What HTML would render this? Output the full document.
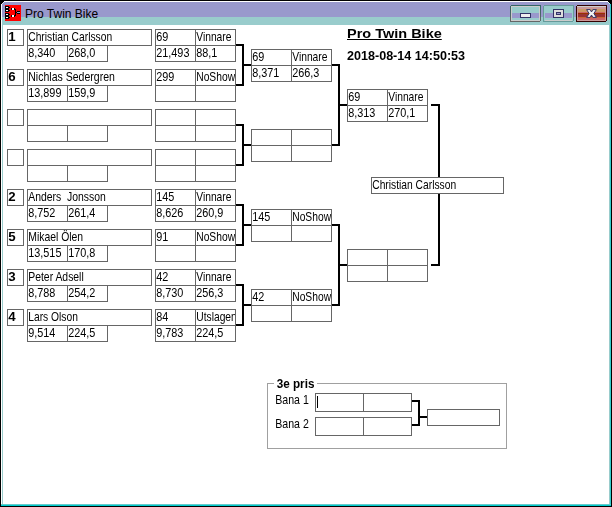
<!DOCTYPE html>
<html><head><meta charset="utf-8"><title>Pro Twin Bike</title>
<style>
html,body{margin:0;padding:0;}
body{width:612px;height:507px;background:#fff;position:relative;overflow:hidden;font-family:"Liberation Sans",sans-serif;color:#000;}
div{position:absolute;box-sizing:content-box;}
.b{border:1px solid #666;background:#fff;}
.r{}
.t{will-change:transform;height:15px;overflow:hidden;white-space:pre;font-size:13px;line-height:15px;}
.t span{display:inline-block;transform:scaleX(0.79);transform-origin:0 0;padding-left:0.3px;}
.n{font-weight:bold;}
.l{overflow:visible;}
.h1,.h2,.lg{will-change:transform;}
.h1{font-weight:bold;font-size:13.3px;line-height:16px;white-space:pre;}
.h1 span{text-decoration:underline;transform:scaleX(1.09);}
.h2 span{transform:scaleX(0.945);}
.h2{font-weight:bold;font-size:13.3px;line-height:16px;white-space:pre;}
.h1 span,.h2 span{display:inline-block;transform-origin:0 0;}
.gb{border:1px solid #a0a0a0;}
.lg{background:#fff;font-weight:bold;font-size:13px;line-height:16px;white-space:pre;}
.lg span{display:inline-block;transform:scaleX(0.9);transform-origin:0 0;padding-left:3px;}
.ttl{font-size:12px;line-height:18px;white-space:pre;letter-spacing:0px;color:#000;}
.n span{transform:scaleX(1.02);}
.d span{transform:scaleX(0.835);}
.l span{transform:scaleX(0.815);}

</style></head>
<body>
<svg style="position:absolute;left:0;top:0" width="612" height="507" viewBox="0 0 612 507" shape-rendering="crispEdges">
<rect x="0" y="0" width="612" height="507" fill="#000"/>
<rect x="1" y="1" width="610" height="505" fill="#fff"/>
<rect x="2" y="2" width="609" height="15" fill="#9999cc"/>
<rect x="2" y="17" width="609" height="8" fill="#99cccc"/>
<rect x="2" y="25" width="1" height="479" fill="#99cccc"/>
<rect x="609" y="17" width="1" height="487" fill="#99cccc"/>
<rect x="610" y="4" width="1" height="502" fill="#33cccc"/>
<rect x="1" y="504" width="610" height="1" fill="#66cccc"/>
<rect x="1" y="505" width="610" height="1" fill="#00cccc"/>
<!-- corners -->
<rect x="1" y="1" width="3" height="1" fill="#000"/><rect x="1" y="2" width="2" height="1" fill="#000"/><rect x="1" y="3" width="1" height="1" fill="#000"/>
<rect x="3" y="2" width="1" height="1" fill="#ddddee"/><rect x="2" y="3" width="1" height="1" fill="#ddddee"/>
<rect x="608" y="1" width="3" height="1" fill="#000"/><rect x="609" y="2" width="2" height="1" fill="#000"/><rect x="610" y="3" width="1" height="1" fill="#000"/>
<rect x="608" y="2" width="1" height="1" fill="#ddeeee"/><rect x="609" y="3" width="1" height="1" fill="#99ffff"/>
<!-- app icon -->
<g>
<rect x="5" y="5" width="16" height="16" fill="#ff0000"/>
<rect x="5" y="6" width="4" height="6" fill="#000"/><rect x="5" y="13" width="4" height="6" fill="#000"/>
<rect x="6" y="7" width="2" height="1" fill="#fff"/><rect x="6" y="10" width="2" height="1" fill="#fff"/>
<rect x="6" y="14" width="2" height="1" fill="#fff"/><rect x="6" y="17" width="2" height="1" fill="#fff"/>
<rect x="9" y="7" width="1" height="1" fill="#000"/><rect x="9" y="10" width="1" height="1" fill="#000"/>
<rect x="9" y="14" width="1" height="1" fill="#000"/><rect x="9" y="17" width="1" height="1" fill="#000"/>
<rect x="11" y="8" width="4" height="2" fill="#000"/><rect x="12" y="8" width="2" height="2" fill="#fff"/>
<rect x="11" y="15" width="4" height="2" fill="#000"/><rect x="12" y="15" width="2" height="2" fill="#fff"/>
<rect x="15" y="9" width="1" height="7" fill="#000"/><rect x="16" y="12" width="1" height="1" fill="#000"/>
<rect x="17" y="11" width="3" height="3" fill="#000"/><rect x="17" y="12" width="3" height="1" fill="#9999cc"/>
</g>
<!-- minimize -->
<g>
<defs><linearGradient id="mg" x1="0" y1="0" x2="0" y2="1"><stop offset="0" stop-color="#336666"/><stop offset="0.45" stop-color="#446666"/><stop offset="1" stop-color="#666666"/></linearGradient></defs><rect x="510" y="5" width="31" height="17" rx="2" fill="url(#mg)"/>
<rect x="511" y="6" width="29" height="15" rx="1" fill="#cccccc"/>
<rect x="512" y="7" width="27" height="6" fill="#99cccc"/>
<rect x="512" y="13" width="27" height="5" fill="#9999cc"/>
<rect x="512" y="18" width="27" height="2" fill="#99cccc"/>
<rect x="520" y="13" width="11" height="5" rx="1" fill="#333366"/>
<rect x="521" y="14" width="9" height="3" fill="#eeeeee"/>
</g>
<!-- maximize -->
<g>
<rect x="543" y="5" width="31" height="17" rx="2" fill="#669999"/>
<rect x="544" y="6" width="29" height="15" rx="1" fill="#99cccc"/>
<rect x="545" y="7" width="27" height="6" fill="#99cccc"/>
<rect x="545" y="13" width="27" height="5" fill="#9999cc"/>
<rect x="545" y="18" width="27" height="2" fill="#99cccc"/>
<rect x="545" y="20" width="27" height="1" fill="#cccccc"/>
<rect x="553" y="9" width="11" height="9" rx="1" fill="#333366"/>
<rect x="554" y="10" width="9" height="7" fill="#dddddd"/>
<rect x="556" y="12" width="5" height="3" fill="#333366"/>
<rect x="557" y="13" width="3" height="1" fill="#9999cc"/>
</g>
<!-- close -->
<g>
<rect x="576" y="5" width="31" height="17" rx="2" fill="#330000"/>
<rect x="577" y="6" width="29" height="15" fill="#cc9999"/><rect x="577" y="6" width="29" height="1" fill="#cccccc"/>
<rect x="578" y="7" width="27" height="2" fill="#cc9999"/>
<rect x="578" y="9" width="27" height="3" fill="#cc9966"/>
<rect x="578" y="12" width="27" height="1" fill="#cc6666"/>
<rect x="578" y="13" width="27" height="1" fill="#993300"/>
<rect x="578" y="14" width="27" height="3" fill="#993333"/>
<rect x="578" y="17" width="27" height="1" fill="#cc6633"/>
<rect x="578" y="18" width="27" height="2" fill="#cc6666"/>
<rect x="578" y="20" width="27" height="1" fill="#cc9999"/>
</g>
<g shape-rendering="auto">
<polygon points="586.6,9.6 590.2,9.6 591.5,12.0 592.8,9.6 596.4,9.6 593.9,13.5 596.4,17.4 592.8,17.4 591.5,15.0 590.2,17.4 586.6,17.4 589.1,13.5" fill="#f4f4f4" stroke="#333366" stroke-width="1" stroke-linejoin="round"/>
</g>
</svg>
<div class="r" style="left:3px;top:25px;width:606px;height:479px;background:#fff"></div>
<div class="ttl" style="left:25px;top:5px"><span>Pro Twin Bike</span></div>

<div class="b" style="left:7px;top:29px;width:15px;height:15px;"></div><div class="t n" style="left:8px;top:29px;width:15px;"><span>1</span></div>
<div class="b" style="left:27px;top:29px;width:123px;height:15px;"></div><div class="t" style="left:28px;top:29px;width:123px;"><span>Christian Carlsson</span></div>
<div class="b" style="left:27px;top:45px;width:39px;height:15px;"></div><div class="t d" style="left:28px;top:45px;width:39px;"><span>8,340</span></div><div class="b" style="left:67px;top:45px;width:39px;height:15px;"></div><div class="t d" style="left:68px;top:45px;width:39px;"><span>268,0</span></div>
<div class="b" style="left:155px;top:29px;width:39px;height:15px;"></div><div class="t d" style="left:156px;top:29px;width:39px;"><span>69</span></div><div class="b" style="left:195px;top:29px;width:39px;height:15px;"></div><div class="t" style="left:196px;top:29px;width:39px;"><span>Vinnare</span></div><div class="b" style="left:155px;top:45px;width:39px;height:15px;"></div><div class="t d" style="left:156px;top:45px;width:39px;"><span>21,493</span></div><div class="b" style="left:195px;top:45px;width:39px;height:15px;"></div><div class="t d" style="left:196px;top:45px;width:39px;"><span>88,1</span></div>
<div class="b" style="left:7px;top:69px;width:15px;height:15px;"></div><div class="t n" style="left:8px;top:69px;width:15px;"><span>6</span></div>
<div class="b" style="left:27px;top:69px;width:123px;height:15px;"></div><div class="t" style="left:28px;top:69px;width:123px;"><span style="transform:scaleX(0.81)">Nichlas Sedergren</span></div>
<div class="b" style="left:27px;top:85px;width:39px;height:15px;"></div><div class="t d" style="left:28px;top:85px;width:39px;"><span>13,899</span></div><div class="b" style="left:67px;top:85px;width:39px;height:15px;"></div><div class="t d" style="left:68px;top:85px;width:39px;"><span>159,9</span></div>
<div class="b" style="left:155px;top:69px;width:39px;height:15px;"></div><div class="t d" style="left:156px;top:69px;width:39px;"><span>299</span></div><div class="b" style="left:195px;top:69px;width:39px;height:15px;"></div><div class="t" style="left:196px;top:69px;width:39px;"><span>NoShow</span></div><div class="b" style="left:155px;top:85px;width:39px;height:15px;"></div><div class="b" style="left:195px;top:85px;width:39px;height:15px;"></div>
<div class="b" style="left:7px;top:109px;width:15px;height:15px;"></div>
<div class="b" style="left:27px;top:109px;width:123px;height:15px;"></div>
<div class="b" style="left:27px;top:125px;width:39px;height:15px;"></div><div class="b" style="left:67px;top:125px;width:39px;height:15px;"></div>
<div class="b" style="left:155px;top:109px;width:39px;height:15px;"></div><div class="b" style="left:195px;top:109px;width:39px;height:15px;"></div><div class="b" style="left:155px;top:125px;width:39px;height:15px;"></div><div class="b" style="left:195px;top:125px;width:39px;height:15px;"></div>
<div class="b" style="left:7px;top:149px;width:15px;height:15px;"></div>
<div class="b" style="left:27px;top:149px;width:123px;height:15px;"></div>
<div class="b" style="left:27px;top:165px;width:39px;height:15px;"></div><div class="b" style="left:67px;top:165px;width:39px;height:15px;"></div>
<div class="b" style="left:155px;top:149px;width:39px;height:15px;"></div><div class="b" style="left:195px;top:149px;width:39px;height:15px;"></div><div class="b" style="left:155px;top:165px;width:39px;height:15px;"></div><div class="b" style="left:195px;top:165px;width:39px;height:15px;"></div>
<div class="b" style="left:7px;top:189px;width:15px;height:15px;"></div><div class="t n" style="left:8px;top:189px;width:15px;"><span>2</span></div>
<div class="b" style="left:27px;top:189px;width:123px;height:15px;"></div><div class="t" style="left:28px;top:189px;width:123px;"><span style="transform:scaleX(0.8)">Anders  Jonsson</span></div>
<div class="b" style="left:27px;top:205px;width:39px;height:15px;"></div><div class="t d" style="left:28px;top:205px;width:39px;"><span>8,752</span></div><div class="b" style="left:67px;top:205px;width:39px;height:15px;"></div><div class="t d" style="left:68px;top:205px;width:39px;"><span>261,4</span></div>
<div class="b" style="left:155px;top:189px;width:39px;height:15px;"></div><div class="t d" style="left:156px;top:189px;width:39px;"><span>145</span></div><div class="b" style="left:195px;top:189px;width:39px;height:15px;"></div><div class="t" style="left:196px;top:189px;width:39px;"><span>Vinnare</span></div><div class="b" style="left:155px;top:205px;width:39px;height:15px;"></div><div class="t d" style="left:156px;top:205px;width:39px;"><span>8,626</span></div><div class="b" style="left:195px;top:205px;width:39px;height:15px;"></div><div class="t d" style="left:196px;top:205px;width:39px;"><span>260,9</span></div>
<div class="b" style="left:7px;top:229px;width:15px;height:15px;"></div><div class="t n" style="left:8px;top:229px;width:15px;"><span>5</span></div>
<div class="b" style="left:27px;top:229px;width:123px;height:15px;"></div><div class="t" style="left:28px;top:229px;width:123px;"><span style="transform:scaleX(0.8)">Mikael Ölen</span></div>
<div class="b" style="left:27px;top:245px;width:39px;height:15px;"></div><div class="t d" style="left:28px;top:245px;width:39px;"><span>13,515</span></div><div class="b" style="left:67px;top:245px;width:39px;height:15px;"></div><div class="t d" style="left:68px;top:245px;width:39px;"><span>170,8</span></div>
<div class="b" style="left:155px;top:229px;width:39px;height:15px;"></div><div class="t d" style="left:156px;top:229px;width:39px;"><span>91</span></div><div class="b" style="left:195px;top:229px;width:39px;height:15px;"></div><div class="t" style="left:196px;top:229px;width:39px;"><span>NoShow</span></div><div class="b" style="left:155px;top:245px;width:39px;height:15px;"></div><div class="b" style="left:195px;top:245px;width:39px;height:15px;"></div>
<div class="b" style="left:7px;top:269px;width:15px;height:15px;"></div><div class="t n" style="left:8px;top:269px;width:15px;"><span>3</span></div>
<div class="b" style="left:27px;top:269px;width:123px;height:15px;"></div><div class="t" style="left:28px;top:269px;width:123px;"><span style="transform:scaleX(0.8)">Peter Adsell</span></div>
<div class="b" style="left:27px;top:285px;width:39px;height:15px;"></div><div class="t d" style="left:28px;top:285px;width:39px;"><span>8,788</span></div><div class="b" style="left:67px;top:285px;width:39px;height:15px;"></div><div class="t d" style="left:68px;top:285px;width:39px;"><span>254,2</span></div>
<div class="b" style="left:155px;top:269px;width:39px;height:15px;"></div><div class="t d" style="left:156px;top:269px;width:39px;"><span>42</span></div><div class="b" style="left:195px;top:269px;width:39px;height:15px;"></div><div class="t" style="left:196px;top:269px;width:39px;"><span>Vinnare</span></div><div class="b" style="left:155px;top:285px;width:39px;height:15px;"></div><div class="t d" style="left:156px;top:285px;width:39px;"><span>8,730</span></div><div class="b" style="left:195px;top:285px;width:39px;height:15px;"></div><div class="t d" style="left:196px;top:285px;width:39px;"><span>256,3</span></div>
<div class="b" style="left:7px;top:309px;width:15px;height:15px;"></div><div class="t n" style="left:8px;top:309px;width:15px;"><span>4</span></div>
<div class="b" style="left:27px;top:309px;width:123px;height:15px;"></div><div class="t" style="left:28px;top:309px;width:123px;"><span>Lars Olson</span></div>
<div class="b" style="left:27px;top:325px;width:39px;height:15px;"></div><div class="t d" style="left:28px;top:325px;width:39px;"><span>9,514</span></div><div class="b" style="left:67px;top:325px;width:39px;height:15px;"></div><div class="t d" style="left:68px;top:325px;width:39px;"><span>224,5</span></div>
<div class="b" style="left:155px;top:309px;width:39px;height:15px;"></div><div class="t d" style="left:156px;top:309px;width:39px;"><span>84</span></div><div class="b" style="left:195px;top:309px;width:39px;height:15px;"></div><div class="t" style="left:196px;top:309px;width:39px;"><span>Utslagen</span></div><div class="b" style="left:155px;top:325px;width:39px;height:15px;"></div><div class="t d" style="left:156px;top:325px;width:39px;"><span>9,783</span></div><div class="b" style="left:195px;top:325px;width:39px;height:15px;"></div><div class="t d" style="left:196px;top:325px;width:39px;"><span>224,5</span></div>
<div class="b" style="left:251px;top:49px;width:39px;height:15px;"></div><div class="t d" style="left:252px;top:49px;width:39px;"><span>69</span></div><div class="b" style="left:291px;top:49px;width:39px;height:15px;"></div><div class="t" style="left:292px;top:49px;width:39px;"><span>Vinnare</span></div><div class="b" style="left:251px;top:65px;width:39px;height:15px;"></div><div class="t d" style="left:252px;top:65px;width:39px;"><span>8,371</span></div><div class="b" style="left:291px;top:65px;width:39px;height:15px;"></div><div class="t d" style="left:292px;top:65px;width:39px;"><span>266,3</span></div>
<div class="b" style="left:251px;top:129px;width:39px;height:15px;"></div><div class="b" style="left:291px;top:129px;width:39px;height:15px;"></div><div class="b" style="left:251px;top:145px;width:39px;height:15px;"></div><div class="b" style="left:291px;top:145px;width:39px;height:15px;"></div>
<div class="b" style="left:251px;top:209px;width:39px;height:15px;"></div><div class="t d" style="left:252px;top:209px;width:39px;"><span>145</span></div><div class="b" style="left:291px;top:209px;width:39px;height:15px;"></div><div class="t" style="left:292px;top:209px;width:39px;"><span>NoShow</span></div><div class="b" style="left:251px;top:225px;width:39px;height:15px;"></div><div class="b" style="left:291px;top:225px;width:39px;height:15px;"></div>
<div class="b" style="left:251px;top:289px;width:39px;height:15px;"></div><div class="t d" style="left:252px;top:289px;width:39px;"><span>42</span></div><div class="b" style="left:291px;top:289px;width:39px;height:15px;"></div><div class="t" style="left:292px;top:289px;width:39px;"><span>NoShow</span></div><div class="b" style="left:251px;top:305px;width:39px;height:15px;"></div><div class="b" style="left:291px;top:305px;width:39px;height:15px;"></div>
<div class="b" style="left:347px;top:89px;width:39px;height:15px;"></div><div class="t d" style="left:348px;top:89px;width:39px;"><span>69</span></div><div class="b" style="left:387px;top:89px;width:39px;height:15px;"></div><div class="t" style="left:388px;top:89px;width:39px;"><span>Vinnare</span></div><div class="b" style="left:347px;top:105px;width:39px;height:15px;"></div><div class="t d" style="left:348px;top:105px;width:39px;"><span>8,313</span></div><div class="b" style="left:387px;top:105px;width:39px;height:15px;"></div><div class="t d" style="left:388px;top:105px;width:39px;"><span>270,1</span></div>
<div class="b" style="left:347px;top:249px;width:39px;height:15px;"></div><div class="b" style="left:387px;top:249px;width:39px;height:15px;"></div><div class="b" style="left:347px;top:265px;width:39px;height:15px;"></div><div class="b" style="left:387px;top:265px;width:39px;height:15px;"></div>
<div class="r" style="left:236px;top:44px;width:8px;height:2px;background:#000"></div><div class="r" style="left:236px;top:84px;width:8px;height:2px;background:#000"></div><div class="r" style="left:242px;top:44px;width:2px;height:42px;background:#000"></div><div class="r" style="left:244px;top:64px;width:7px;height:2px;background:#000"></div>
<div class="r" style="left:236px;top:124px;width:8px;height:2px;background:#000"></div><div class="r" style="left:236px;top:164px;width:8px;height:2px;background:#000"></div><div class="r" style="left:242px;top:124px;width:2px;height:42px;background:#000"></div><div class="r" style="left:244px;top:144px;width:7px;height:2px;background:#000"></div>
<div class="r" style="left:236px;top:204px;width:8px;height:2px;background:#000"></div><div class="r" style="left:236px;top:244px;width:8px;height:2px;background:#000"></div><div class="r" style="left:242px;top:204px;width:2px;height:42px;background:#000"></div><div class="r" style="left:244px;top:224px;width:7px;height:2px;background:#000"></div>
<div class="r" style="left:236px;top:284px;width:8px;height:2px;background:#000"></div><div class="r" style="left:236px;top:324px;width:8px;height:2px;background:#000"></div><div class="r" style="left:242px;top:284px;width:2px;height:42px;background:#000"></div><div class="r" style="left:244px;top:304px;width:7px;height:2px;background:#000"></div>
<div class="r" style="left:332px;top:64px;width:8px;height:2px;background:#000"></div><div class="r" style="left:332px;top:144px;width:8px;height:2px;background:#000"></div><div class="r" style="left:338px;top:64px;width:2px;height:82px;background:#000"></div><div class="r" style="left:340px;top:104px;width:7px;height:2px;background:#000"></div>
<div class="r" style="left:332px;top:224px;width:8px;height:2px;background:#000"></div><div class="r" style="left:332px;top:304px;width:8px;height:2px;background:#000"></div><div class="r" style="left:338px;top:224px;width:2px;height:82px;background:#000"></div><div class="r" style="left:340px;top:264px;width:7px;height:2px;background:#000"></div>
<div class="r" style="left:431px;top:104px;width:9px;height:2px;background:#000"></div><div class="r" style="left:431px;top:264px;width:9px;height:2px;background:#000"></div><div class="r" style="left:438px;top:104px;width:2px;height:162px;background:#000"></div>
<div class="b" style="left:371px;top:177px;width:131px;height:15px;"></div><div class="t" style="left:372px;top:177px;width:131px;"><span>Christian Carlsson</span></div>
<div class="h1" style="left:347px;top:26px"><span>Pro Twin Bike</span></div>
<div class="h2" style="left:347px;top:48px"><span>2018-08-14 14:50:53</span></div>
<div class="gb" style="left:267px;top:383px;width:238px;height:64px"></div>
<div class="lg" style="left:274px;top:376px;width:43px;height:16px"><span>3e pris</span></div>
<div class="t l" style="left:275px;top:392px;"><span>Bana 1</span></div>
<div class="t l" style="left:275px;top:416px;"><span>Bana 2</span></div>
<div class="b" style="left:315px;top:393px;width:47px;height:17px;"></div><div class="b" style="left:363px;top:393px;width:47px;height:17px;"></div><div class="b" style="left:315px;top:417px;width:47px;height:17px;"></div><div class="b" style="left:363px;top:417px;width:47px;height:17px;"></div>
<div class="r" style="left:317px;top:396px;width:1px;height:12px;background:#000"></div>
<div class="r" style="left:412px;top:400px;width:8px;height:2px;background:#000"></div><div class="r" style="left:412px;top:424px;width:8px;height:2px;background:#000"></div><div class="r" style="left:418px;top:400px;width:2px;height:26px;background:#000"></div><div class="r" style="left:420px;top:416px;width:7px;height:2px;background:#000"></div>
<div class="b" style="left:427px;top:409px;width:71px;height:15px;"></div>
</body></html>
